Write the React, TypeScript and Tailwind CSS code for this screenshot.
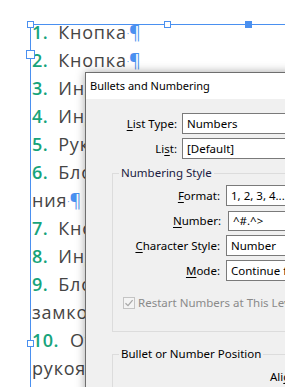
import React from "react";

function Handle({ x, y, size = 7, filled = false }: { x: number; y: number; size?: number; filled?: boolean }) {
  return (
    <div
      className={`absolute border border-[#4a90f0] ${filled ? "bg-[#4a90f0]" : "bg-white"}`}
      style={{ left: x, top: y, width: size, height: size }}
    />
  );
}

function Line({ num, text, pil, gap = 10 }: { num?: string; text: string; pil?: boolean; gap?: number }) {
  return (
    <div className="whitespace-nowrap h-[28px] leading-[28px]">
      {num && (
        <span className="text-[#17a47b] font-semibold tracking-[0.5px]" style={{ marginRight: gap }}>
          {num}
        </span>
      )}
      <span className="tracking-[0.8px]">{text}</span>
      {pil && (
        <span className="text-[#4a90f0]">
          <span className="text-[9px] align-middle">·</span>¶
        </span>
      )}
    </div>
  );
}

function U({ children }: { children: React.ReactNode }) {
  return <span className="underline underline-offset-[2px]">{children}</span>;
}

function Field({ children, w = 160, h = 21 }: { children: React.ReactNode; w?: number; h?: number }) {
  return (
    <div
      className="border border-[#7a7a7a] bg-white flex items-center pl-[4px] whitespace-nowrap overflow-hidden shrink-0"
      style={{ width: w, height: h }}
    >
      {children}
    </div>
  );
}

function Row({ label, lw, gap, children, mt = 0 }: { label: React.ReactNode; lw: number; gap: number; children: React.ReactNode; mt?: number }) {
  return (
    <div className="flex items-center h-[21px]" style={{ marginTop: mt }}>
      <div className="text-right whitespace-nowrap shrink-0" style={{ width: lw }}>
        {label}
      </div>
      <div className="shrink-0" style={{ marginLeft: gap }}>
        {children}
      </div>
    </div>
  );
}

export default function App() {
  return (
    <div className="relative w-[285px] h-[387px] overflow-hidden bg-white">
      {/* text frame */}
      <div className="ml-[30px] mt-[24px] h-[400px] border-l border-t border-[#4a90f0]">
        <div
          className="-mt-[7px] pl-[1px] text-[18px] text-[#454545]"
          style={{ fontFamily: '"Open Sans", "Noto Sans", sans-serif' }}
        >
          <Line num="1." text="Кнопка" pil />
          <Line num="2." text="Кнопка" pil />
          <Line num="3." text="Индикатор" />
          <Line num="4." text="Индикатор" />
          <Line num="5." text="Рукоятка" />
          <Line num="6." text="Блокировка открыва-" />
          <Line text="ния" pil />
          <Line num="7." text="Кнопка" />
          <Line num="8." text="Индикатор" />
          <Line num="9." text="Блокировка" />
          <Line text="замков" />
          <Line num="10." text="Отверстие" gap={11} />
          <Line text="рукоятки" />
        </div>
      </div>

      {/* frame handles */}
      <Handle x={27} y={21} />
      <Handle x={164} y={21} />
      <Handle x={245} y={21} filled />
      <Handle x={26} y={50} size={9} />
      <Handle x={27} y={340} />

      {/* dialog */}
      <div
        className="absolute left-[85px] top-[72px] w-[320px] h-[340px] border border-[#6e6e6e] bg-[#f0f0f0] shadow-[0_0_9px_rgba(0,0,0,0.35)] text-[11.5px] text-black"
        style={{ fontFamily: '"Noto Sans", "Open Sans", sans-serif' }}
      >
        <div className="h-[26px] bg-white flex items-center pl-[4px] whitespace-nowrap text-[11px]">Bullets and Numbering</div>

        <div className="pt-[14px]">
          <Row label={<><U>L</U>ist Type:</>} lw={91} gap={5}>
            <Field>Numbers</Field>
          </Row>
          <Row label={<>Li<U>s</U>t:</>} lw={91} gap={5} mt={4}>
            <Field>[Default]</Field>
          </Row>

          <fieldset className="ml-[26px] mt-[6px] w-[300px] border border-[#dcdcdc] pb-[20px] min-w-0">
            <legend className="ml-[6px] px-[2px] leading-[16px] whitespace-nowrap text-[#1a1a40]">Numbering Style</legend>
            <div className="pt-[4px] flex flex-col gap-[4px]">
              <Row label={<><U>F</U>ormat:</>} lw={107} gap={6}>
                <Field w={140}>1, 2, 3, 4...</Field>
              </Row>
              <Row label={<><U>N</U>umber:</>} lw={108} gap={7}>
                <Field w={140} h={20}>^#.^&gt;</Field>
              </Row>
              <Row label={<><U>C</U>haracter Style:</>} lw={107} gap={6}>
                <Field w={140}>Number</Field>
              </Row>
              <Row label={<><U>M</U>ode:</>} lw={107} gap={6}>
                <Field w={140}>Continue from Previous Number</Field>
              </Row>
            </div>
            <div className="flex items-center mt-[13px] ml-[10px] whitespace-nowrap text-[#8a8a8a]">
              <div className="w-[12px] h-[12px] border border-[#c4c4c4] bg-[#f4f4f4] flex items-center justify-center shrink-0">
                <svg width="10" height="10" viewBox="0 0 10 10">
                  <path d="M1.5 5.2 L4 7.6 L8.6 2.2" fill="none" stroke="#a8a8a8" strokeWidth="1.3" />
                </svg>
              </div>
              <span className="ml-[3px]">Restart Numbers at This Level After:</span>
            </div>
          </fieldset>

          <fieldset className="ml-[26px] mt-[14px] w-[300px] border border-[#dcdcdc] h-[80px] min-w-0">
            <legend className="ml-[6px] px-[2px] leading-[16px] whitespace-nowrap">Bullet or Number Position</legend>
            <div className="pl-[157px] pt-[6px] whitespace-nowrap">
              Ali<U>g</U>nment:
            </div>
          </fieldset>
        </div>
      </div>
    </div>
  );
}
